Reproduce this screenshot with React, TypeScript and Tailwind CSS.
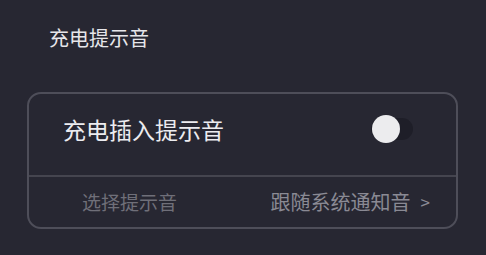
export default function App() {
  return (
    <div
      className="w-[486px] h-[255px] bg-[#272732] overflow-hidden"
      style={{ fontFamily: '"Noto Sans CJK SC", "Noto Sans", sans-serif' }}
    >
      <div className="pl-[49px] pt-[24px] h-[92px] text-[20px] leading-[28px] text-[#e6e6ea]">
        充电提示音
      </div>
      <div className="ml-[27px] w-[431px] h-[137px] border-2 border-[#4e4e59] rounded-[14px] flex flex-col">
        <div className="h-[81px] flex items-center justify-between pl-[34px] pr-[43px]">
          <span className="text-[23px] leading-[30px] text-[#ececf0] mt-[-12px]">充电插入提示音</span>
          <div className="relative w-[42px] h-[22px] mt-[-11px] rounded-full bg-[#1e1e28]">
            <div className="absolute left-[1px] top-[-3px] w-[28px] h-[28px] rounded-full bg-[#ececee]" />
          </div>
        </div>
        <div className="h-[1.5px] bg-[#45454f]" />
        <div className="flex-1 flex items-center justify-between pl-[53px] pr-[26px]">
          <span className="text-[19px] leading-[26px] text-[#6f6f79]">选择提示音</span>
          <span className="text-[20px] leading-[26px] text-[#8a8a94] flex items-center gap-[10px]">
            <span>跟随系统通知音</span>
            <span className="text-[17px]">&gt;</span>
          </span>
        </div>
      </div>
    </div>
  );
}
